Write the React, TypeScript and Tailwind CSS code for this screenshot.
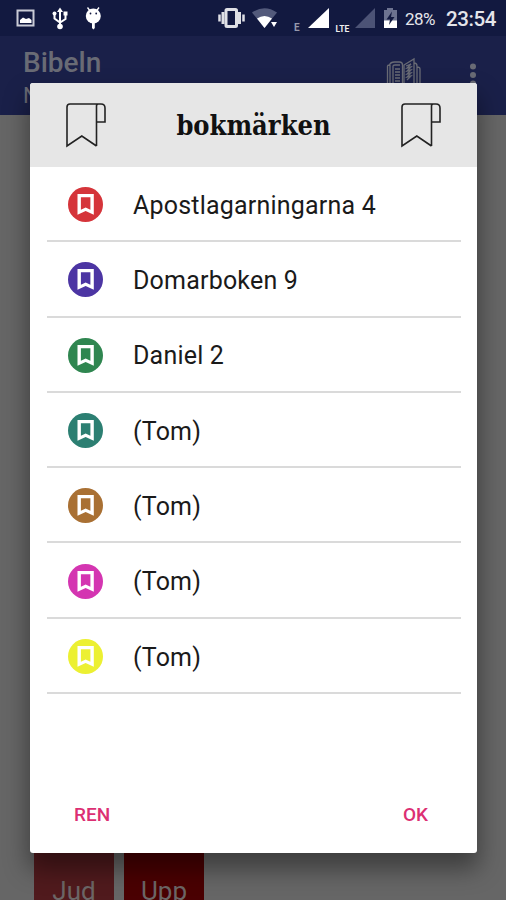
const bookmarks = [
  { label: "Apostlagarningarna 4", color: "text-[#d5343a]" },
  { label: "Domarboken 9", color: "text-[#4c35a3]" },
  { label: "Daniel 2", color: "text-[#2f8650]" },
  { label: "(Tom)", color: "text-[#2c7f72]" },
  { label: "(Tom)", color: "text-[#a97033]" },
  { label: "(Tom)", color: "text-[#d435b1]" },
  { label: "(Tom)", color: "text-[#ecf032]" },
];

export default function App() {
  return (
    <div className="relative flex h-[900px] w-[506px] flex-col overflow-hidden bg-[#666666] font-['Roboto',sans-serif]">
      <StatusBar />
      <AppBar />
      <div className="flex flex-1 items-end gap-[10px] pl-[34px]">
        <BookTile name="Jud" className="bg-[#501a1d]" />
        <BookTile name="Upp" className="bg-[#4a0002]" />
      </div>
      <BookmarkDialog />
    </div>
  );
}

function StatusBar() {
  return (
    <div className="flex h-9 shrink-0 items-center bg-[#121940] text-[#e4e5ea]">
      <svg className="h-9 w-[400px] shrink-0" viewBox="0 0 400 36" fill="none">
        {/* picture */}
        <rect x="17.500" y="10.500" width="16" height="15" stroke="#c9cbd6" strokeWidth="2" />
        <path d="M20 23v-3l3-2.500 3 1.500 3-1 2.500 2v3z" fill="#fff" />
        {/* usb */}
        <g stroke="#fff" strokeWidth="2">
          <path d="M60 26V10M54.500 14v4.500l5.500 4 5.500-3.500v-5" />
        </g>
        <path d="M60 7.500l3 4.500h-6z" fill="#fff" />
        <circle cx="60" cy="26.500" r="2.800" fill="#fff" />
        <circle cx="54.500" cy="13.500" r="2" fill="#fff" />
        <path d="M63.500 11.500h4v4h-4z" fill="#fff" />
        {/* android head */}
        <path d="M87.500 7.500l3 4M99 7.500l-3 4" stroke="#fff" strokeWidth="1.300" />
        <circle cx="93.300" cy="16" r="7.500" fill="#fff" />
        <path d="M92 22h2.800v6l-1.400 1.500-1.400-1.500z" fill="#fff" />
        <circle cx="90.500" cy="13.500" r=".9" fill="#121940" />
        <circle cx="96.200" cy="13.500" r=".9" fill="#121940" />
        {/* vibrate */}
        <rect x="226" y="9.500" width="10.500" height="17" rx="1" stroke="#dfe0e6" strokeWidth="3" />
        <path d="M223 12v12M239.500 12v12" stroke="#dfe0e6" strokeWidth="3" />
        <path d="M219.500 14.500v7M243.500 14.500v7" stroke="#dfe0e6" strokeWidth="2.500" />
        {/* wifi */}
        <path d="M252 12.500Q264.500 4 277 12.500L264.500 28z" fill="#535a7b" />
        <path d="M257 18.500Q264.500 13.500 272 18.500L264.500 28z" fill="#fff" />
        <path d="M271 22h6l-3 5z" fill="#fff" />
        {/* signals */}
        <path d="M308 28h21V8z" fill="#fff" />
        <path d="M355 28h20V8z" fill="#4c5376" />
        {/* battery */}
        <path d="M387 8h6v2h4v18h-13V10h3z" fill="#6d7390" />
        <path d="M384 20.500h13V28h-13z" fill="#fff" />
        <path d="M392 11.500l-5.500 8h3.500l-1 5.500 5.500-8h-3.500z" fill="#121940" />
        <text x="294" y="31" fill="#9699ac" fontSize="10" fontWeight="700">E</text>
        <text x="335.500" y="32" fill="#eee" fontSize="8.500" fontWeight="700">LTE</text>
      </svg>
      <span className="ml-[5px] w-[31px] pt-1 text-[17px] tracking-[-0.6px]">28%</span>
      <span className="ml-[10px] pt-[3px] text-[20.500px] font-medium tracking-[-0.4px]">23:54</span>
    </div>
  );
}

function AppBar() {
  return (
    <div className="flex h-[79px] shrink-0 justify-between bg-[#1a2049] text-[#696b75]">
      <div className="pt-[11px] pl-[23px]">
        <p className="text-[28px] leading-8 font-medium">Bibeln</p>
        <p className="mt-[3px] text-[22px] leading-7">N</p>
      </div>
      <div className="flex pt-[20px]">
        <svg className="h-9 w-9" viewBox="0 0 36 36" fill="none" stroke="currentColor" strokeWidth="1.300">
          <path d="M4 30V9M1.500 30V10q0-1 2-1 1-3 5-3h5q3 0 3 3v21M7 30V10q0-1 2-1h5" />
          <path d="M18 30V9l10-6v27M28 7q3 0 3 3v20M31 11q3 0 3 2v17" />
          <path d="M9 13h5M9 16h5M9 19h5M9 22h5M9 25h5M20 10l5-2-4 4 4-1-4 4 4-1-4 4 4-1-4 4 4-1-4 4" />
        </svg>
        <svg className="mr-[26px] ml-[42px] h-9 w-4" viewBox="0 0 16 36" fill="currentColor">
          <circle cx="9" cy="10.500" r="3" />
          <circle cx="9" cy="19" r="3" />
          <circle cx="9" cy="27.500" r="3" />
        </svg>
      </div>
    </div>
  );
}

function BookTile(props: { name: string; className: string }) {
  return (
    <div
      className={`flex h-[65px] w-20 items-end justify-center text-[26px] leading-[18px] text-[#6c6666] ${props.className}`}
    >
      {props.name}
    </div>
  );
}

function BookmarkDialog() {
  return (
    <div className="absolute top-[83px] left-[30px] flex h-[770px] w-[447px] flex-col overflow-hidden rounded-[3px] bg-white shadow-[0_14px_24px_2px_rgba(0,0,0,0.4)]">
      <div className="flex h-[84px] shrink-0 items-center justify-between bg-[#e6e6e6] px-[35px]">
        <RibbonIcon />
        <h1 className="pt-[2px] font-['DejaVu_Serif_Condensed','DejaVu_Serif',serif] text-[27px] leading-8 font-bold text-[#111111]">
          bokmärken
        </h1>
        <RibbonIcon />
      </div>

      <ul className="mr-4 ml-[17px]">
        {bookmarks.map((bookmark, i) => (
          <li
            key={i}
            className="flex h-[75.300px] items-center border-b-2 border-[#dadada] pt-[2px] pl-[21px]"
          >
            <BookmarkIcon className={bookmark.color} />
            <span className="ml-[30px] pt-[2px] text-[25px] tracking-[0.2px] text-[#1a1a1a]">
              {bookmark.label}
            </span>
          </li>
        ))}
      </ul>

      <div className="mt-auto flex justify-between px-[44px] pb-[24px] text-[19px] font-medium text-[#dc2f73]">
        <button>REN</button>
        <button className="mr-[5px]">OK</button>
      </div>
    </div>
  );
}

function BookmarkIcon(props: { className: string }) {
  return (
    <svg className={`h-[35px] w-[35px] ${props.className}`} viewBox="0 0 35 35">
      <circle cx="17.500" cy="17.500" r="17.500" fill="currentColor" />
      <path
        d="M9.500 7h16.300v20.800l-8.150-3.800-8.150 3.800zM12.900 10.300v12.500l4.750-2.300 4.750 2.300V10.300z"
        fill="#fff"
        fillRule="evenodd"
      />
    </svg>
  );
}

function RibbonIcon() {
  return (
    <svg
      className="h-12 w-[42px]"
      viewBox="0 0 42 48"
      fill="none"
      stroke="#222"
      strokeWidth="1.600"
    >
      <path d="M31.500 45V5q0-2 2-2M34 3H5Q2 3 2 6v39l14.800-10 14.700 10M32 3h4q4 0 4 4v14h-8" />
    </svg>
  );
}
